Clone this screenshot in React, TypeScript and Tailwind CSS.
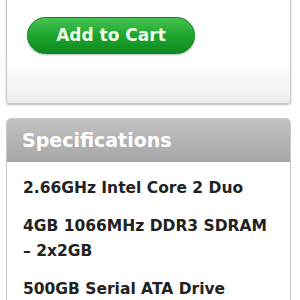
export default function App() {
  const specs = ["2.66GHz Intel Core 2 Duo", "4GB 1066MHz DDR3 SDRAM –\u00a02x2GB", "500GB Serial ATA Drive"]

  return (
    <div className="h-[300px] w-[300px] overflow-hidden bg-white" style={{ fontFamily: "'DejaVu Sans', sans-serif" }}>
      <div className="-mt-[10px] ml-[6px] w-[285px] rounded-b-[3px] border border-[#c8c8c8] bg-gradient-to-b from-white from-60% to-[#eeeeee] pb-[49px] pt-[26px] shadow-[0_1px_2px_rgba(0,0,0,0.25)]">
        <button className="ml-[20px] flex h-[37px] w-[168px] items-center justify-center rounded-full border border-[#10801f] bg-gradient-to-b from-[#45c452] via-[#1ca52e] to-[#0f8a20] text-[17px] font-bold text-[#eefbe8] shadow-[0_1px_2px_rgba(0,0,0,0.3)]">
          Add to Cart
        </button>
      </div>

      <div className="ml-[6px] mt-[14px] w-[285px] overflow-hidden rounded-t-[5px] border border-[#c8c8c8]">
        <div className="flex h-[43px] items-center bg-gradient-to-b from-[#c2c2c2] to-[#a6a6a6] pl-[15px] text-[19px] font-bold text-white">
          Specifications
        </div>
        <div className="flex flex-col gap-[13px] pl-[16px] pr-[10px] pt-[14px] text-[15.5px] font-bold leading-[25px] text-[#222]">
          {specs.map((s) => (
            <div key={s}>{s}</div>
          ))}
        </div>
      </div>
    </div>
  )
}
